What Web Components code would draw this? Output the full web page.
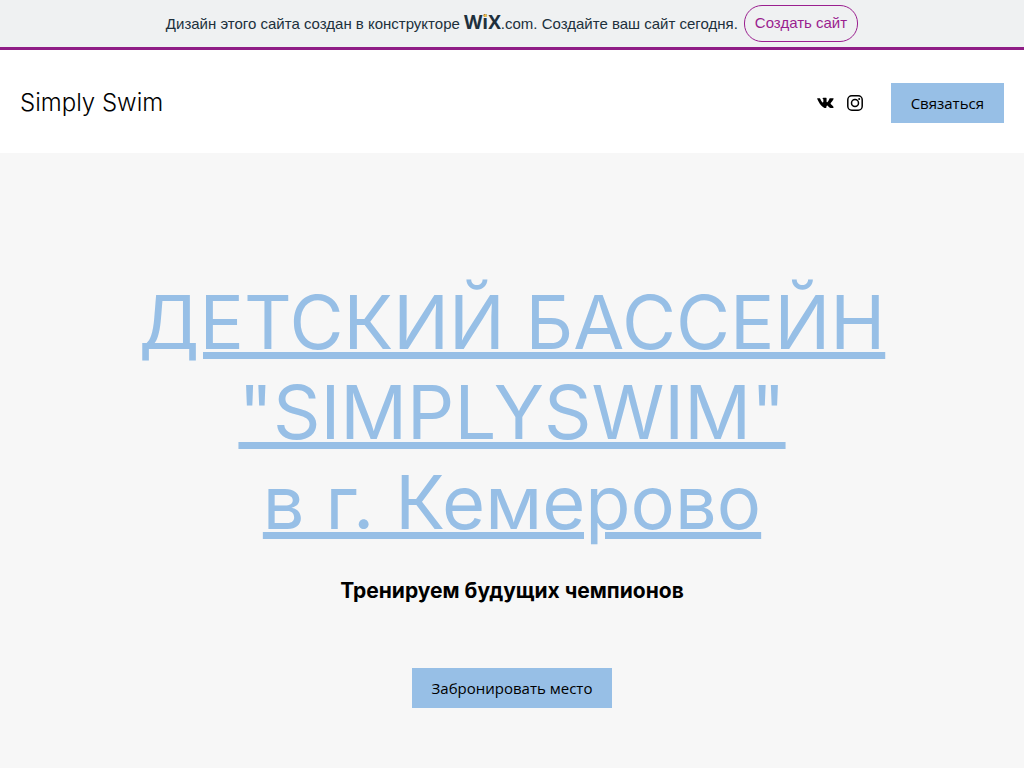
<!DOCTYPE html>
<html lang="ru">
<head>
<meta charset="utf-8">
<title>Simply Swim</title>
<style>
body { margin: 0; min-height: 100vh; display: flex; flex-direction: column; background: #f7f7f7; color: #000; font-family: Inter, "Open Sans", sans-serif; }
swim-hero { flex: 1; }
</style>
</head>
<body>
<builder-banner></builder-banner>
<site-header>Simply Swim</site-header>
<swim-hero>
  <span slot="title">ДЕТСКИЙ БАССЕЙН<br>"SIMPLYSWIM"<br>в г. Кемерово</span>
  <span slot="subtitle">Тренируем будущих чемпионов</span>
  <action-button slot="action">Забронировать место</action-button>
</swim-hero>
<script>
function define(name, markup) {
  customElements.define(name, class extends HTMLElement {
    constructor() {
      super();
      this.attachShadow({ mode: "open" }).innerHTML = markup;
    }
  });
}

define("action-button", `
<style>
:host { display: inline-block; }
button { display: block; height: 40px; padding: 0 20px; border: 0; border-radius: 0; background: #97bfe6; color: #000; font: 400 15px/20px "Open Sans", sans-serif; white-space: nowrap; cursor: pointer; }
</style>
<button type="button"><slot></slot></button>`);

define("wix-logo", `
<style>
:host { display: inline-block; position: relative; color: #20303c; font: 700 19px/20px "Open Sans", sans-serif; }
i { position: absolute; left: 20px; top: 2px; width: 3px; height: 3px; border-radius: 2px; background: #fac249; }
</style>
WiX<i></i>`);

define("builder-banner", `
<style>
:host { display: flex; align-items: center; justify-content: center; gap: 6px; height: 47px; border-bottom: 3px solid #8f1d86; background: #eff1f2; color: #20303c; font: 15px/20px "Liberation Sans", Arial, sans-serif; }
p { margin: 0; padding-bottom: 2px; white-space: nowrap; }
a { box-sizing: border-box; padding: 7px 10px 8px; border: 1px solid #9a1f8f; border-radius: 18px; color: #9a1f8f; text-decoration: none; white-space: nowrap; }
</style>
<p>Дизайн этого сайта создан в конструкторе <wix-logo></wix-logo>.com. Создайте ваш сайт сегодня.</p>
<a href="#create">Создать сайт</a>`);

define("social-links", `
<style>
:host { display: flex; gap: 10px; }
a { display: block; color: #000; }
svg { display: block; width: 20px; height: 20px; fill: currentColor; }
</style>
<a href="#vk" aria-label="VK"><svg viewBox="0 0 20 20"><path d="M9.5 15.1h1.1s.3 0 .5-.2c.2-.2.2-.5.2-.5s0-1.5.7-1.8c.7-.2 1.6 1.5 2.6 2.1.7.5 1.2.4 1.2.4l2.5 0s1.3-.1.7-1.1c-.1-.1-.4-.8-2-2.3-1.7-1.5-1.4-1.3.6-3.9 1.2-1.6 1.6-2.6 1.5-3-.1-.4-.9-.3-.9-.3h-2.8s-.2 0-.4.1c-.2.1-.3.3-.3.3s-.4 1.2-1 2.1c-1.2 2-1.7 2.1-1.9 2-.5-.3-.3-1.2-.3-1.8 0-2 .3-2.8-.6-3-.3-.1-.5-.1-1.3-.1-1 0-1.8 0-2.3.3-.3.2-.6.5-.4.5.2 0 .6.1.8.4.3.4.3 1.2.3 1.2s.2 2.4-.4 2.7c-.4.2-.9-.2-2.1-2.2C5 6 4.6 5.1 4.6 5.1s-.1-.2-.2-.3C4.2 4.700 3.900 4.600 3.900 4.600H1.800s-.4 0-.5.2c-.1.1 0 .4 0 .4s2 4.800 4.400 7.200c2.100 2.500 3.800 2.700 3.800 2.700z" transform="translate(1 1) scale(.92)"/></svg></a>
<a href="#instagram" aria-label="Instagram"><svg viewBox="0 0 20 20"><g fill="none" stroke="currentColor" stroke-width="1.500"><rect x="2.800" y="2.800" width="14.400" height="14.400" rx="4"/><circle cx="10" cy="10" r="3.500"/></g><circle cx="14.200" cy="5.900" r="1"/></svg></a>`);

define("site-header", `
<style>
:host { display: block; background: #fff; }
header { display: flex; align-items: center; padding: 33px 20px 30px; }
.name { flex: 1; color: #000; text-decoration: none; font: 300 24px/28px Inter, sans-serif; }
social-links { margin-right: 26px; }
</style>
<header><a class="name" href="#home"><slot></slot></a><social-links></social-links><action-button>Связаться</action-button></header>`);

define("swim-hero", `
<style>
:host { display: block; background: #f7f7f7; text-align: center; }
section { padding: 124px 20px 60px; }
h1 { margin: 0; color: #97bfe6; font: 400 74px/90px Inter, sans-serif; text-decoration: underline; text-decoration-thickness: 7px; text-underline-offset: 3px; }
p { margin: 30px 0 63px; font: 700 21px/28px Inter, sans-serif; }
</style>
<section>
<h1><slot name="title"></slot></h1>
<p><slot name="subtitle"></slot></p>
<slot name="action"></slot>
</section>`);
</script>
</body>
</html>
